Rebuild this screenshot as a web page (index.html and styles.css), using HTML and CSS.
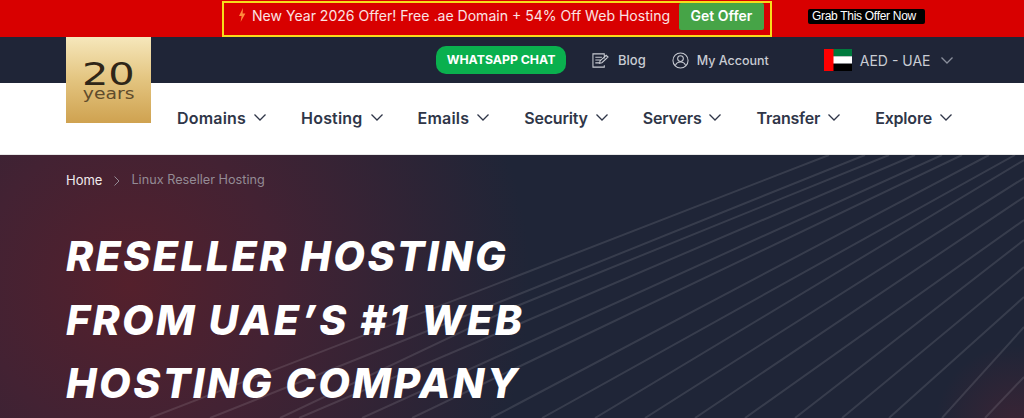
FILE: index.html

```html
<!DOCTYPE html>
<html lang="en">
<head>
    <meta charset="UTF-8">
    <meta name="viewport" content="width=device-width, initial-scale=1.0">
    <title>Linux Reseller Hosting</title>
    <link rel="stylesheet" href="styles.css">
</head>
<body>
    <div class="offer-bar">
        <div class="offer-box">
            <svg class="bolt" viewBox="0 0 8 14"><path d="M5 0 1 8h2.600L2.600 14 7.400 5.400H4.600z"/></svg>
            <span class="offer-text">New Year 2026 Offer! Free .ae Domain + 54% Off Web Hosting</span>
            <a class="offer-btn">Get Offer</a>
        </div>
        <span class="offer-tag">Grab This Offer Now</span>
    </div>

    <header class="site-header">
        <a class="logo">
            <span class="logo-num">20</span>
            <span class="logo-sub">years</span>
        </a>
        <div class="top-row">
            <a class="chat-btn">WHATSAPP CHAT</a>
            <a class="top-link blog-link">
                <svg class="top-icon" viewBox="0 0 18 16"><path d="M13 6V1H1v14h12v-2M3.500 4.500h7M3.500 7.500h6M3.500 10.500h4M8 11l.5-2.500L15 2.500l2 1.800-6.500 6z"/></svg>
                Blog
            </a>
            <a class="top-link account-link">
                <svg class="top-icon" viewBox="0 0 18 18"><circle cx="9" cy="9" r="8"/><circle cx="9" cy="7" r="3"/><path d="M3.500 14.500c1-3 3-4 5.500-4s4.500 1 5.500 4"/></svg>
                My Account
            </a>
            <a class="currency">
                <svg class="flag" viewBox="0 0 28 22"><rect width="28" height="7.300" fill="#007a3d"/><rect y="7.300" width="28" height="7.400" fill="#fff"/><rect y="14.700" width="28" height="7.300" fill="#000"/><rect width="9.500" height="22" fill="#f00"/></svg>
                AED - UAE
                <svg class="chev chev-light" viewBox="0 0 12 7"><path d="M.5.500 6 6l5.500-5.500"/></svg>
            </a>
        </div>
        <nav class="main-nav">
            <a>Domains <svg class="chev" viewBox="0 0 12 7"><path d="M.5.500 6 6l5.500-5.500"/></svg></a>
            <a>Hosting <svg class="chev" viewBox="0 0 12 7"><path d="M.5.500 6 6l5.500-5.500"/></svg></a>
            <a>Emails <svg class="chev" viewBox="0 0 12 7"><path d="M.5.500 6 6l5.500-5.500"/></svg></a>
            <a>Security <svg class="chev" viewBox="0 0 12 7"><path d="M.5.500 6 6l5.500-5.500"/></svg></a>
            <a>Servers <svg class="chev" viewBox="0 0 12 7"><path d="M.5.500 6 6l5.500-5.500"/></svg></a>
            <a>Transfer <svg class="chev" viewBox="0 0 12 7"><path d="M.5.500 6 6l5.500-5.500"/></svg></a>
            <a>Explore <svg class="chev" viewBox="0 0 12 7"><path d="M.5.500 6 6l5.500-5.500"/></svg></a>
        </nav>
    </header>

    <section class="hero">
        <svg class="hero-lines" viewBox="0 155 1024 263">
            <path d="M150 418 512 278 829 155M210 418 512 297 865 155M280 418 512 308 889 155M299 418 512 327 915 155M362 418 512 350 942 155M412 418 512 370 962 155M491 418 512 407 989 155M542 418 1015 155M595 418 1024 160M645 418 1024 178M695 418 1024 197M745 418 1024 220M795 418 1024 240M842 418 1024 267M889 418 1024 297M942 418 1024 327M985 418 1024 377"/>
        </svg>
        <div class="breadcrumb">
            <a>Home</a>
            <svg class="crumb-sep" viewBox="0 0 6 10"><path d="M.5.500 5 5 .5 9.500"/></svg>
            <span>Linux Reseller Hosting</span>
        </div>
        <h1>RESELLER HOSTING<br>FROM UAE’S #1 WEB<br>HOSTING COMPANY</h1>
    </section>
</body>
</html>
```

FILE: styles.css

```css
* {
    margin: 0;
    padding: 0;
    box-sizing: border-box;
}

body {
    font-family: 'Inter', 'Liberation Sans', sans-serif;
    background: #1f2537;
    height: 418px;
    overflow: hidden;
}

.offer-bar {
    height: 37px;
    background: #d80000;
    padding: 1px 0 0 222px;
    display: flex;
    align-items: flex-start;
    gap: 36px;
}

.offer-box {
    width: 550px;
    height: 36px;
    border: 2px solid #f7dc1a;
    display: flex;
    align-items: flex-start;
    padding: 0 0 0 14px;
    color: #fbe3e3;
}

.bolt {
    width: 8px;
    height: 14px;
    margin: 5px 6px 0 0;
    fill: #ff8a3c;
}

.offer-text {
    font-size: 14.050px;
    line-height: 25px;
    width: 427px;
    white-space: nowrap;
}

.offer-btn {
    width: 85px;
    height: 27px;
    background: #46a447;
    border-radius: 2px;
    color: #fff;
    font-size: 14px;
    font-weight: 600;
    line-height: 25px;
    text-align: center;
}

.offer-tag {
    margin-top: 8px;
    width: 117px;
    height: 15px;
    background: #000;
    border-radius: 2px;
    color: #fff;
    font-family: 'Liberation Sans', sans-serif;
    font-size: 12px;
    letter-spacing: -0.3px;
    line-height: 15px;
    padding-left: 4px;
    white-space: nowrap;
}

.site-header {
    position: relative;
}

.logo {
    position: absolute;
    left: 66px;
    top: 0;
    width: 85px;
    height: 86px;
    background: linear-gradient(180deg, #f6e7bb 0%, #e3c47f 50%, #cfa250 100%);
    color: #2f2618;
    display: flex;
    flex-direction: column;
    align-items: center;
    padding-top: 24px;
}

.logo-num {
    font-family: 'DejaVu Sans', sans-serif;
    font-size: 32px;
    line-height: 27px;
    transform: scaleX(1.3);
}

.logo-sub {
    font-family: 'DejaVu Sans', sans-serif;
    font-size: 15px;
    line-height: 13px;
    color: #5f4c2c;
    transform: scaleX(1.25);
}

.top-row {
    height: 46px;
    display: flex;
    align-items: center;
    padding-left: 436px;
    color: #c9ccd3;
    font-size: 13px;
    font-weight: 500;
}

.chat-btn {
    width: 130px;
    height: 28px;
    background: #0ab04e;
    border-radius: 10px;
    color: #fff;
    font-size: 12.300px;
    font-weight: 700;
    line-height: 28px;
    text-align: center;
    margin-right: 26px;
}

.top-link {
    display: flex;
    align-items: center;
    gap: 9px;
}

.blog-link {
    margin-right: 26px;
}

.account-link {
    font-size: 12.500px;
    gap: 8px;
    margin-right: 55px;
}

.top-icon {
    width: 17px;
    height: 17px;
    fill: none;
    stroke: #c9ccd3;
    stroke-width: 1.100;
}

.currency {
    display: flex;
    align-items: center;
    font-size: 14px;
    font-weight: 400;
    gap: 8px;
}

.flag {
    width: 28px;
    height: 22px;
}

.chev {
    width: 12px;
    height: 7px;
    fill: none;
    stroke: currentColor;
    stroke-width: 1.300;
}

.chev-light {
    stroke: #8a8f9c;
    margin-left: 2px;
}

.main-nav {
    height: 72px;
    background: #fff;
    border-bottom: 1px solid #e8e8e8;
    display: flex;
    align-items: center;
    padding: 0 0 2px 177px;
    gap: 35px;
    color: #2f3648;
    font-size: 16px;
    font-weight: 600;
    letter-spacing: 0.2px;
}

.main-nav a {
    display: flex;
    align-items: center;
    gap: 8px;
}

.main-nav a:nth-child(n+4) {
    letter-spacing: -0.2px;
}

.hero {
    position: relative;
    height: 263px;
    padding: 17px 0 0 66px;
    color: #fff;
    background:
        radial-gradient(circle at 1015px 270px, rgba(90, 35, 50, 0.45) 0, rgba(31, 37, 55, 0) 80px),
        radial-gradient(circle at 130px 130px, #54202c 0, #432233 150px, #1f2537 400px);
}

.hero-lines {
    position: absolute;
    left: 0;
    top: 0;
    width: 1024px;
    height: 263px;
    fill: none;
    stroke: rgba(255, 255, 255, 0.11);
    stroke-width: 2;
}

.breadcrumb {
    position: relative;
    display: flex;
    align-items: center;
    font-size: 12.700px;
    line-height: 16px;
    color: #948b95;
}

.breadcrumb a {
    color: #f0ecee;
    font-size: 13px;
}

.crumb-sep {
    width: 6px;
    height: 10px;
    margin: 2px 11px 0 12px;
    fill: none;
    stroke: #948b95;
}

.hero h1 {
    position: relative;
    margin-top: 37px;
    font-size: 41px;
    font-weight: 800;
    font-style: italic;
    letter-spacing: 2.400px;
    line-height: 63.500px;
    white-space: nowrap;
}
```
